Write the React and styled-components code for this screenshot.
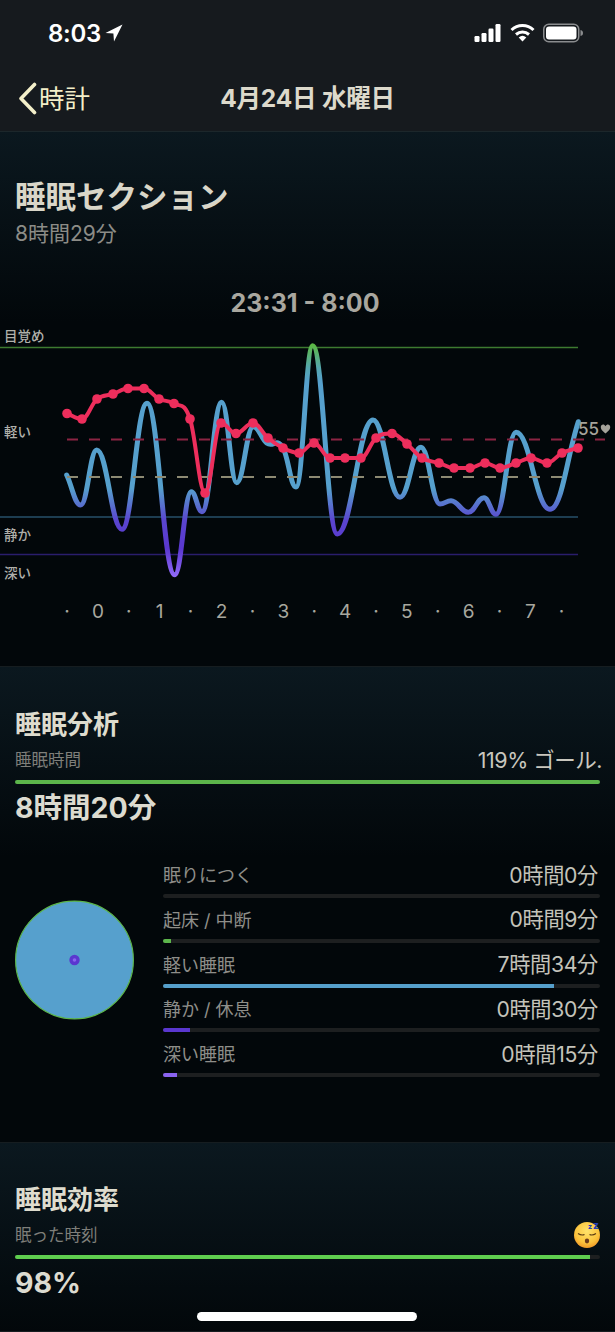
import styled, { createGlobalStyle } from "styled-components";

const GlobalStyle = createGlobalStyle`
  html, body {
    margin: 0;
    padding: 0;
    background: #02070a;
  }
  * {
    box-sizing: border-box;
  }
`;

const FONT = `Inter, "Noto Sans CJK JP", "Noto Sans", sans-serif`;

const Phone = styled.div`
  position: relative;
  width: 615px;
  height: 1332px;
  overflow: hidden;
  font-family: ${FONT};
  background: #02070a;
`;

const Header = styled.header`
  height: 132px;
  background: #161a1e;
  border-bottom: 1px solid #1c272b;
`;

const StatusBar = styled.div`
  height: 66px;
  padding: 0 31px 0 48px;
  display: flex;
  align-items: center;
  justify-content: space-between;
`;

const Clock = styled.div`
  display: flex;
  align-items: center;
  gap: 4px;
  color: #fff;
  font-size: 24px;
  font-weight: 600;
  letter-spacing: -0.3px;
`;

const StatusIcons = styled.div`
  display: flex;
  align-items: center;
  gap: 8px;
`;

const NavBar = styled.div`
  position: relative;
  height: 65px;
  display: flex;
  align-items: center;
  justify-content: center;
`;

const BackLink = styled.div`
  position: absolute;
  left: 18px;
  top: 0;
  height: 65px;
  display: flex;
  align-items: center;
  gap: 2px;
`;

const BackText = styled.span`
  padding-bottom: 4px;
  color: #f3efc9;
  font-size: 25.5px;
  font-weight: 400;
`;

const NavTitle = styled.div`
  padding-bottom: 5px;
  color: #dcd9cb;
  font-size: 24.5px;
  font-weight: 700;
  letter-spacing: -0.2px;
`;

const Section = styled.section`
  padding: ${(p) => p.$top}px 15px 0;
  height: ${(p) => p.$height}px;
  border-bottom: 1px solid #161d20;
  background: linear-gradient(#0b181f, #02070a 190px);
`;

const BigTitle = styled.h1`
  margin: 0;
  color: #d9d6c8;
  font-size: 30.5px;
  line-height: 36px;
  font-weight: 700;
`;

const SubTitle = styled.div`
  margin-top: 4px;
  color: #8c8c87;
  font-size: 21px;
  line-height: 30px;
`;

const RangeLabel = styled.div`
  margin-top: 39px;
  padding-right: 5px;
  text-align: center;
  color: #a9a79f;
  font-size: 25px;
  line-height: 30px;
  font-weight: 700;
`;

const Chart = styled.svg`
  display: block;
  margin: 2px -15px 0;
  width: 615px;
  height: 310px;
`;

const SectionTitle = styled.h2`
  margin: 0;
  color: #dedcce;
  font-size: 26px;
  line-height: 34px;
  font-weight: 700;
`;

const GoalRow = styled.div`
  margin-top: 4px;
  height: 26px;
  display: flex;
  align-items: center;
  justify-content: space-between;
`;

const GoalLabel = styled.span`
  color: #7f7f7a;
  font-size: 16.5px;
`;

const GoalValue = styled.span`
  margin-right: -2px;
  padding-bottom: 1px;
  color: #c9c7be;
  font-size: 21.5px;
  letter-spacing: -0.5px;
`;

const Track = styled.div`
  height: ${(p) => p.$size}px;
  margin-top: ${(p) => p.$gap}px;
  border-radius: 2px;
  background: #1d1f20;
  overflow: hidden;
`;

const Fill = styled.div`
  height: 100%;
  background: ${(p) => p.$color};
`;

const BigValue = styled.div`
  margin-top: ${(p) => p.$gap}px;
  color: #dcdbd0;
  font-size: 28.5px;
  line-height: 36px;
  font-weight: 700;
`;

const Breakdown = styled.div`
  margin-top: 33px;
  display: flex;
  align-items: flex-start;
  justify-content: space-between;
`;

const Pie = styled.svg`
  display: block;
  margin-top: 41px;
  width: 119px;
  height: 120px;
`;

const StatList = styled.div`
  width: 437px;
`;

const Stat = styled.div`
  height: 44.75px;
`;

const StatText = styled.div`
  height: 30px;
  display: flex;
  align-items: center;
  justify-content: space-between;
`;

const StatLabel = styled.span`
  color: #8e8e89;
  font-size: 18px;
`;

const StatValue = styled.span`
  margin-right: 2px;
  padding-bottom: 2px;
  color: #c4c3ba;
  font-size: 21.2px;
  letter-spacing: -0.3px;
`;

const Emoji = styled.svg`
  display: block;
  width: 26px;
  height: 30px;
`;

const HomeBar = styled.div`
  position: absolute;
  left: 197px;
  bottom: 11px;
  width: 220px;
  height: 9px;
  border-radius: 5px;
  background: #fff;
`;

const blue = [
  [66.7, 475], [80.7, 505], [96.7, 450], [122, 529.3], [147, 403.3], [174.7, 574.7],
  [191.3, 491.7], [202, 511.7], [221.7, 402.3], [236.7, 482.7], [253.3, 426.7],
  [266.7, 443], [283, 448], [296, 487], [312.7, 345.7], [337.3, 534], [373, 420],
  [400, 497.3], [421, 447.3], [440, 504], [451, 500.7], [468.3, 512.3], [484, 497.7],
  [496, 514.3], [516, 432.3], [550, 509.3], [578.3, 421.7],
];

const red = [
  [67, 413.5], [82, 419], [97, 399], [113, 394], [128, 388.5], [144, 388.5], [159, 399],
  [174, 403.5], [190, 419], [205, 493], [221, 423], [236, 433.5], [253, 423], [268, 438],
  [283, 448], [299, 453], [314, 443], [330, 458], [345, 458], [361, 458], [376, 438],
  [392, 433.5], [407, 444], [422, 458], [439, 463], [454, 468], [470, 468], [485, 463],
  [500, 468], [516, 463], [531, 458], [547, 463], [562, 453], [578, 448],
];

const hours = ["·", "0", "·", "1", "·", "2", "·", "3", "·", "4", "·", "5", "·", "6", "·", "7", "·"];

const stages = [
  { label: "目覚め", y: 341 },
  { label: "軽い", y: 437 },
  { label: "静か", y: 540 },
  { label: "深い", y: 578 },
];

const stats = [
  { label: "眠りにつく", value: "0時間0分", width: 0, color: "#5cb54b" },
  { label: "起床 / 中断", value: "0時間9分", width: 1.8, color: "#5cb54b" },
  { label: "軽い睡眠", value: "7時間34分", width: 89.5, color: "#559fcb" },
  { label: "静か / 休息", value: "0時間30分", width: 6.2, color: "#5a37cf" },
  { label: "深い睡眠", value: "0時間15分", width: 3.2, color: "#8a63f0" },
];

// monotone cubic through the points, flat at every peak and valley
function smooth(points, k = 0.42) {
  const slope = (a, b) => (b[1] - a[1]) / (b[0] - a[0]);
  const tangents = points.map((p, i) => {
    if (i === 0) return slope(p, points[1]);
    if (i === points.length - 1) return slope(points[i - 1], p);
    const s0 = slope(points[i - 1], p);
    const s1 = slope(p, points[i + 1]);
    return s0 * s1 <= 0 ? 0 : (s0 + s1) / 2;
  });
  let d = `M${points[0][0]} ${points[0][1]}`;
  for (let i = 0; i < points.length - 1; i++) {
    const [x0, y0] = points[i];
    const [x1, y1] = points[i + 1];
    const dx = (x1 - x0) * k;
    d += ` C${x0 + dx} ${y0 + tangents[i] * dx} ${x1 - dx} ${y1 - tangents[i + 1] * dx} ${x1} ${y1}`;
  }
  return d;
}

function SleepChart() {
  return (
    <Chart viewBox="0 320 615 310">
      <defs>
        <linearGradient id="stage" gradientUnits="userSpaceOnUse" x1="0" y1="345" x2="0" y2="576">
          <stop offset="0" stopColor="#5cb845" />
          <stop offset="0.1" stopColor="#55a7b0" />
          <stop offset="0.16" stopColor="#56a0cd" />
          <stop offset="0.62" stopColor="#56a0cd" />
          <stop offset="0.76" stopColor="#5a45cf" />
          <stop offset="0.88" stopColor="#5a37cf" />
          <stop offset="1" stopColor="#9069f8" />
        </linearGradient>
      </defs>
      <line x1="0" x2="578" y1="347.5" y2="347.5" stroke="#3d7a30" strokeWidth="1.5" />
      <line x1="0" x2="578" y1="517" y2="517" stroke="#27506a" strokeWidth="1.5" />
      <line x1="0" x2="578" y1="554.5" y2="554.5" stroke="#2a1d6c" strokeWidth="1.5" />
      <path d={smooth(blue)} fill="none" stroke="url(#stage)" strokeWidth="5" strokeLinecap="round" />
      <line x1="67" x2="605" y1="439.5" y2="439.5" stroke="#8b2443" strokeWidth="2" strokeDasharray="11 11" />
      <line x1="67" x2="565" y1="477" y2="477" stroke="#8d8a73" strokeWidth="2" strokeDasharray="11 11" />
      <path d={smooth(red, 0.38)} fill="none" stroke="#ee2e5c" strokeWidth="4" strokeLinejoin="round" />
      {red.map(([x, y]) => (
        <circle key={x} cx={x} cy={y} r="4.8" fill="#ee2e5c" />
      ))}
      {stages.map((s) => (
        <text key={s.label} x="4" y={s.y} fontSize="13.5" fontWeight="500" fill="#b0b0aa" fontFamily={FONT}>
          {s.label}
        </text>
      ))}
      {hours.map((h, i) => (
        <text key={i} x={67 + i * 30.9} y="618" fontSize="19" fill="#a8a79f" textAnchor="middle" fontFamily={FONT}>
          {h}
        </text>
      ))}
      <text x="578" y="435" fontSize="17" fontWeight="500" fill="#a5a39b" fontFamily={FONT}>55</text>
      <path
        d="M605.5 433.5 C602 430.5 600.8 429.3 600.8 427 C600.8 424.2 604.2 423.6 605.5 426.2 C606.8 423.6 610.2 424.2 610.2 427 C610.2 429.3 609 430.5 605.5 433.5Z"
        fill="#a5a39b"
      />
    </Chart>
  );
}

function SleepingFace() {
  return (
    <Emoji viewBox="0 0 26 30">
      <defs>
        <radialGradient id="face" cx="0.5" cy="0.35" r="0.7">
          <stop offset="0" stopColor="#ffe36b" />
          <stop offset="0.65" stopColor="#fbc33c" />
          <stop offset="1" stopColor="#ee8f22" />
        </radialGradient>
      </defs>
      <circle cx="13" cy="16" r="13" fill="url(#face)" />
      <path d="M4 14.5 Q7.5 17 10.5 15.5 M15.5 15.5 Q18.5 17 22 14.5" fill="none" stroke="#5b3a12" strokeWidth="1.1" />
      <ellipse cx="13" cy="22" rx="2.2" ry="2.4" fill="#6b3a1a" />
      <text x="14" y="10" fontSize="7" fontWeight="800" fill="#2440b8" fontFamily={FONT}>z</text>
      <text x="19" y="10" fontSize="10" fontWeight="800" fill="#2440b8" fontFamily={FONT}>z</text>
    </Emoji>
  );
}

export default function App() {
  return (
    <Phone>
      <GlobalStyle />
      <Header>
        <StatusBar>
          <Clock>
            8:03
            <svg width="18" height="18" viewBox="0 0 18 18">
              <path d="M17.5 0.5 L0.5 9 L8.4 9.6 L9 17.5Z" fill="#fff" />
            </svg>
          </Clock>
          <StatusIcons>
            <svg width="28" height="20" viewBox="0 0 28 20">
              <rect x="0.5" y="13" width="5" height="6" rx="1.2" fill="#fff" />
              <rect x="7.5" y="10" width="5" height="9" rx="1.2" fill="#fff" />
              <rect x="14.5" y="5.5" width="5" height="13.5" rx="1.2" fill="#fff" />
              <rect x="21.5" y="1" width="5" height="18" rx="1.2" fill="#fff" />
            </svg>
            <svg width="25" height="20" viewBox="0 0 25 20">
              <path d="M1.5 7 A16 16 0 0 1 23.5 7" fill="none" stroke="#fff" strokeWidth="3" />
              <path d="M6 11.5 A10 10 0 0 1 19 11.5" fill="none" stroke="#fff" strokeWidth="3" />
              <path d="M8.7 14.4 A6 6 0 0 1 16.3 14.4 L12.5 18.6Z" fill="#fff" />
            </svg>
            <svg width="41" height="20" viewBox="0 0 41 20">
              <rect x="0.75" y="1.25" width="35" height="17.5" rx="5" fill="none" stroke="#8a8c8e" strokeWidth="1.5" />
              <rect x="3" y="3.5" width="30.5" height="13" rx="3" fill="#fff" />
              <path d="M37.5 7 C39.5 7.5 40 8.5 40 10 C40 11.5 39.5 12.5 37.5 13Z" fill="#8a8c8e" />
            </svg>
          </StatusIcons>
        </StatusBar>
        <NavBar>
          <BackLink>
            <svg width="19" height="33" viewBox="0 0 19 33">
              <path d="M16.5 2.5 L3 16.5 L16.5 30.5" fill="none" stroke="#f3efc9" strokeWidth="3.6" strokeLinecap="round" strokeLinejoin="round" />
            </svg>
            <BackText>時計</BackText>
          </BackLink>
          <NavTitle>4月24日 水曜日</NavTitle>
        </NavBar>
      </Header>

      <Section $top={47} $height={535}>
        <BigTitle>睡眠セクション</BigTitle>
        <SubTitle>8時間29分</SubTitle>
        <RangeLabel>23:31 - 8:00</RangeLabel>
        <SleepChart />
      </Section>

      <Section $top={41} $height={476}>
        <SectionTitle>睡眠分析</SectionTitle>
        <GoalRow>
          <GoalLabel>睡眠時間</GoalLabel>
          <GoalValue>119% ゴール.</GoalValue>
        </GoalRow>
        <Track $size={4} $gap={8}>
          <Fill $color="#5cb54b" style={{ width: "100%" }} />
        </Track>
        <BigValue $gap={6}>8時間20分</BigValue>
        <Breakdown>
          <Pie viewBox="0 0 119 120">
            <circle cx="59.5" cy="60" r="58.9" fill="#56a0cd" stroke="#5cb54b" strokeWidth="1.2" />
            <circle cx="59.5" cy="60" r="5.2" fill="#5a37cf" />
            <circle cx="59.5" cy="60" r="1.8" fill="#8a63f0" />
          </Pie>
          <StatList>
            {stats.map((s) => (
              <Stat key={s.label}>
                <StatText>
                  <StatLabel>{s.label}</StatLabel>
                  <StatValue>{s.value}</StatValue>
                </StatText>
                <Track $size={4} $gap={5}>
                  <Fill $color={s.color} style={{ width: `${s.width}%` }} />
                </Track>
              </Stat>
            ))}
          </StatList>
        </Breakdown>
      </Section>

      <Section $top={40} $height={189}>
        <SectionTitle>睡眠効率</SectionTitle>
        <GoalRow>
          <GoalLabel>眠った時刻</GoalLabel>
          <SleepingFace />
        </GoalRow>
        <Track $size={4} $gap={8}>
          <Fill $color="#5fce4f" style={{ width: "98.3%" }} />
        </Track>
        <BigValue $gap={6}>98%</BigValue>
      </Section>

      <HomeBar />
    </Phone>
  );
}
